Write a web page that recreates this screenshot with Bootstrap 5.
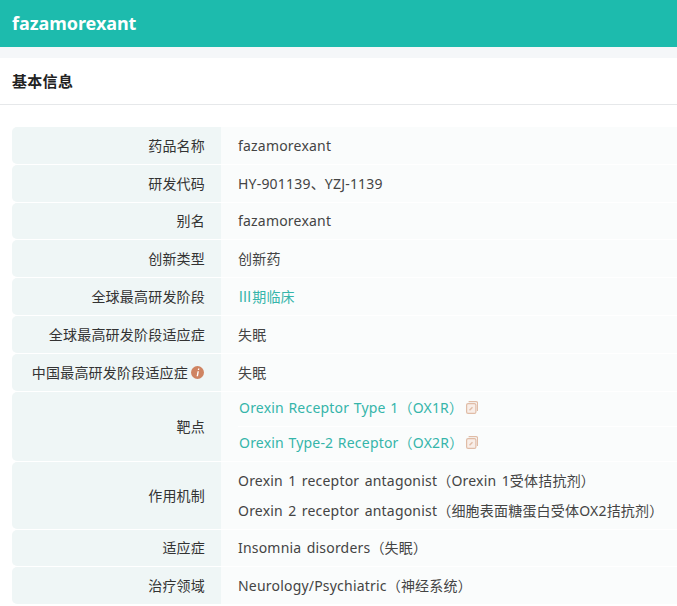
<!DOCTYPE html>
<html lang="zh-CN">
<head>
<meta charset="utf-8">
<title>fazamorexant</title>
<link href="https://cdn.jsdelivr.net/npm/bootstrap@5.3.0/dist/css/bootstrap.min.css" rel="stylesheet">
<style>
html,body{height:606px;overflow:hidden;background:#fff}
body{font-family:"Noto Sans","Noto Sans CJK SC",sans-serif;font-size:14px;color:#444;letter-spacing:.2px;word-spacing:1.5px}
.top-bar{height:47px;background:#1dbbad;color:#fff;font-size:18px;font-weight:700;padding-left:12px;letter-spacing:-.05px}
.gap-band{height:11px;background:#f5f7f9}
.sec-head{height:47px;border-bottom:1px solid #e6e8ea;padding-left:12px;font-size:15px;font-weight:700;color:#222;letter-spacing:.3px}
.info-list{padding:22px 0 0 12px;display:flex;flex-direction:column;gap:1px}
.info-row{display:flex;min-height:36.8px}
.info-label{width:209px;flex:none;background:#eff6f6;border-radius:5px 0 0 5px;padding-right:16px;color:#333;display:flex;align-items:center;justify-content:flex-end}
.info-val{flex:1;background:#fafcfc;padding-left:17px;display:flex;flex-direction:column;justify-content:center}
.tgt-line{height:35px;display:flex;align-items:center;padding:0 0 2px 1px;word-spacing:.7px}
.tgt-line+.tgt-line{border-top:1px solid #fff}
.tgt-line a{color:#35b5aa;text-decoration:none}
.tgt-ico{margin-left:2.5px}
.mech-line{height:30px;display:flex;align-items:center}
.hi-link{color:#35b5aa}
.hint-dot{width:13px;height:13px;margin-left:3px;margin-right:1px}
.row-target{height:69px}
.row-mech{height:67px}
</style>
</head>
<body>
<div class="top-bar d-flex align-items-center">fazamorexant</div>
<div class="gap-band"></div>
<div class="sec-head d-flex align-items-center">基本信息</div>
<div class="info-list">
  <div class="info-row"><div class="info-label">药品名称</div><div class="info-val">fazamorexant</div></div>
  <div class="info-row"><div class="info-label">研发代码</div><div class="info-val">HY-901139、YZJ-1139</div></div>
  <div class="info-row"><div class="info-label">别名</div><div class="info-val">fazamorexant</div></div>
  <div class="info-row"><div class="info-label">创新类型</div><div class="info-val">创新药</div></div>
  <div class="info-row"><div class="info-label">全球最高研发阶段</div><div class="info-val hi-link">Ⅲ期临床</div></div>
  <div class="info-row"><div class="info-label">全球最高研发阶段适应症</div><div class="info-val">失眠</div></div>
  <div class="info-row"><div class="info-label">中国最高研发阶段适应症<svg class="hint-dot" viewBox="0 0 13 13"><circle cx="6.5" cy="6.5" r="6.5" fill="#cf8462"/><path d="M7.1 2.6h1.3l-.3 1.3H6.800zM6.500 5.300h1.400L7 10.300H5.600z" fill="#fff"/></svg></div><div class="info-val">失眠</div></div>
  <div class="info-row row-target"><div class="info-label">靶点</div><div class="info-val">
    <div class="tgt-line"><a href="#">Orexin Receptor Type 1（OX1R）</a><svg class="tgt-ico" width="12" height="13" viewBox="0 0 12 13" fill="none" stroke="#e0bca6" stroke-width="1.200"><rect x=".6" y="2.600" width="9.300" height="9.800" rx="1.500" fill="#f8eee8"/><path d="M2.600.6h7.600a1.300 1.300 0 0 1 1.300 1.300v8.200"/><path d="M3.500 9.200l3-3" stroke-width="1.500"/></svg></div>
    <div class="tgt-line"><a href="#">Orexin Type-2 Receptor（OX2R）</a><svg class="tgt-ico" width="12" height="13" viewBox="0 0 12 13" fill="none" stroke="#e0bca6" stroke-width="1.200"><rect x=".6" y="2.600" width="9.300" height="9.800" rx="1.500" fill="#f8eee8"/><path d="M2.600.6h7.600a1.300 1.300 0 0 1 1.300 1.300v8.200"/><path d="M3.500 9.200l3-3" stroke-width="1.500"/></svg></div>
  </div></div>
  <div class="info-row row-mech"><div class="info-label">作用机制</div><div class="info-val">
    <div class="mech-line">Orexin 1 receptor antagonist（Orexin 1受体拮抗剂）</div>
    <div class="mech-line">Orexin 2 receptor antagonist（细胞表面糖蛋白受体OX2拮抗剂）</div>
  </div></div>
  <div class="info-row"><div class="info-label">适应症</div><div class="info-val">Insomnia disorders（失眠）</div></div>
  <div class="info-row"><div class="info-label">治疗领域</div><div class="info-val">Neurology/Psychiatric（神经系统）</div></div>
</div>
<script src="https://cdn.jsdelivr.net/npm/bootstrap@5.3.0/dist/js/bootstrap.bundle.min.js"></script>
</body>
</html>
